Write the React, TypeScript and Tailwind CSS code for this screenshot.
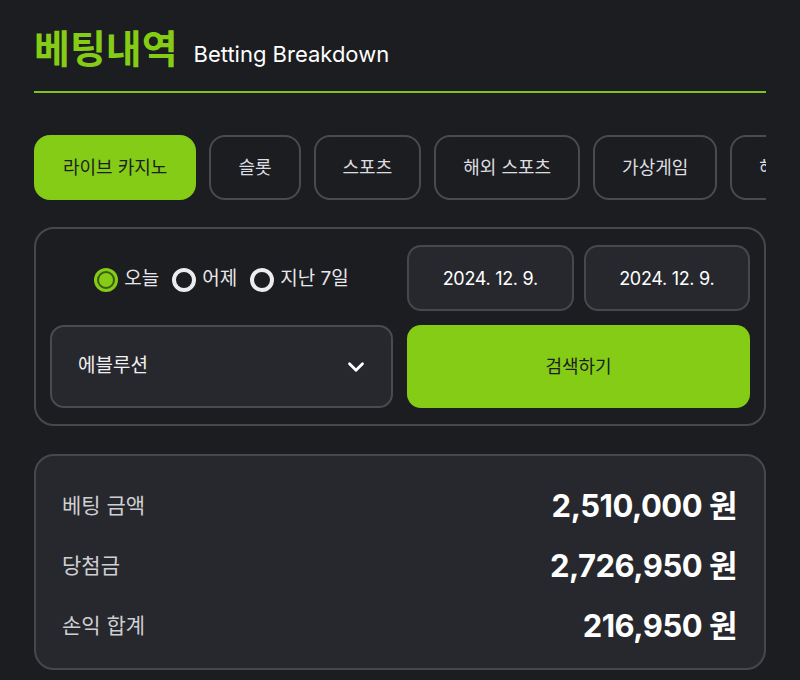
import { ChevronDown } from "lucide-react";

const TABS = ["라이브 카지노", "슬롯", "스포츠", "해외 스포츠", "가상게임", "해외 카지노"];

const SUMMARY = [
  { label: "베팅 금액", value: "2,510,000" },
  { label: "당첨금", value: "2,726,950" },
  { label: "손익 합계", value: "216,950" },
];

function Radio({ label, checked }: { label: string; checked?: boolean }) {
  return (
    <label className="flex items-center gap-[6px] text-[19px] text-[#e8e8ea]">
      {checked ? (
        <span className="flex h-[24px] w-[24px] items-center justify-center rounded-full bg-[#84cc16]">
          <span className="h-[18px] w-[18px] rounded-full border-[2px] border-[#3d5a12] bg-[#84cc16]" />
        </span>
      ) : (
        <span className="h-[24px] w-[24px] rounded-full border-[4px] border-[#ececee]" />
      )}
      {label}
    </label>
  );
}

export default function App() {
  return (
    <div
      className="min-h-[680px] w-full bg-[#1c1d21] px-[34px] pt-[23px] text-white"
      style={{ fontFamily: 'Inter, "Noto Sans CJK KR", sans-serif' }}
    >
      {/* 헤더 */}
      <div className="flex items-end gap-[16px] border-b-[2px] border-[#7fc41e] pb-[16px]">
        <h1 className="text-[39px] font-bold leading-[52px] text-[#84cc16]">베팅내역</h1>
        <span className="pb-[6px] text-[22px] leading-[30px] text-white">Betting Breakdown</span>
      </div>

      {/* 게임 탭 */}
      <div className="mt-[42px] flex gap-[13px] overflow-hidden">
        {TABS.map((t, i) => (
          <button
            key={t}
            className={
              i === 0
                ? "h-[65px] shrink-0 rounded-[16px] border-[2px] border-[#84cc16] bg-[#84cc16] px-[27px] text-[18px] text-[#1c1d21]"
                : "h-[65px] shrink-0 rounded-[16px] border-[2px] border-[#4a4b50] px-[27px] text-[18px] text-[#dedee0]"
            }
          >
            {t}
          </button>
        ))}
      </div>

      {/* 검색 필터 */}
      <div className="mt-[27px] grid grid-cols-2 gap-[14px] rounded-[20px] border-[2px] border-[#47484d] px-[14px] py-[16px]">
        <div className="flex h-[66px] items-center justify-center gap-[13px] pt-[3px]">
          <Radio label="오늘" checked />
          <Radio label="어제" />
          <Radio label="지난 7일" />
        </div>
        <div className="grid grid-cols-2 gap-[10px]">
          <div className="flex h-[66px] items-center justify-center rounded-[14px] border-[2px] border-[#47484d] bg-[#27282d] text-[18px] tracking-[-0.3px]">
            2024. 12. 9.
          </div>
          <div className="flex h-[66px] items-center justify-center rounded-[14px] border-[2px] border-[#47484d] bg-[#27282d] text-[18px] tracking-[-0.3px]">
            2024. 12. 9.
          </div>
        </div>
        <div className="flex h-[83px] items-center justify-between rounded-[14px] border-[2px] border-[#4a4b50] bg-[#27282d] pl-[26px] pr-[22px]">
          <span className="text-[19px] text-[#f0f0f2]">에블루션</span>
          <ChevronDown size={26} strokeWidth={2.6} className="text-white" />
        </div>
        <button className="h-[83px] rounded-[14px] bg-[#84cc16] text-[18px] text-[#1c1d21]">검색하기</button>
      </div>

      {/* 합계 */}
      <div className="mt-[28px] flex flex-col rounded-[20px] border-[2px] border-[#47484d] bg-[#27282d] pb-[12px] pl-[26px] pr-[27px] pt-[20px]">
        {SUMMARY.map((s) => (
          <div key={s.label} className="flex h-[60px] items-center justify-between">
            <span className="text-[21px] text-[#cfcfd3]">{s.label}</span>
            <span className="text-[31px] font-bold tracking-[-0.5px] text-white">{s.value} 원</span>
          </div>
        ))}
      </div>
    </div>
  );
}
